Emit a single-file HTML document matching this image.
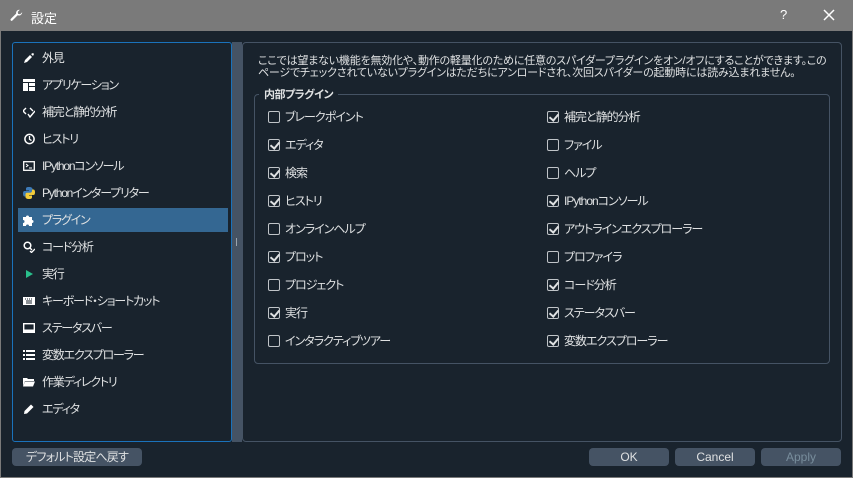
<!DOCTYPE html>
<html><head><meta charset="utf-8"><style>
*{margin:0;padding:0;box-sizing:border-box}
body{width:853px;height:478px;background:#19232d;font-family:"Liberation Sans","Noto Sans CJK JP",sans-serif;font-size:12px;color:#dfe1e2;position:relative;overflow:hidden;font-feature-settings:"palt"}
.abs{position:absolute}
#title{left:0;top:0;width:853px;height:31px;background:#7a7a7a;color:#fff}
#frame{left:0;top:31px;width:853px;height:447px;border:1px solid #7a7a7a;border-top:none}
#left{left:12px;top:42px;width:220px;height:400px;border:1px solid #1a72bb;border-radius:3px}
.it{position:absolute;left:5px;width:210px;height:24px;line-height:24px;padding-left:24px;font-size:12px;letter-spacing:-1.2px;white-space:nowrap}
.it .ic{position:absolute;left:5px;top:6px;width:12px;height:12px}
.sel{background:#346792}
#split{left:232px;top:42px;width:10px;height:400px;background:#455364}
#right{left:242px;top:42px;width:600px;height:400px;border:1px solid #455364;border-radius:4px}
#grp{left:254px;top:94px;width:576px;height:270px;border:1px solid #455364;border-radius:4px}
.cb{position:absolute;height:16px;line-height:16px;padding-left:17px;font-size:12px;letter-spacing:-1px;white-space:nowrap}
.cb i{position:absolute;left:0;top:2px;width:12px;height:12px;border:1px solid #c0c4c8;border-radius:2px}
.cb i.c::after{content:"";position:absolute;left:3px;top:0px;width:4px;height:7px;border:solid #dfe1e2;border-width:0 2px 2px 0;transform:rotate(40deg)}
.btn{position:absolute;top:448px;height:18px;background:#455364;border-radius:4px;text-align:center;line-height:18px;font-size:12px;white-space:nowrap}
.desc{left:258px;font-size:11px;letter-spacing:-0.2px;white-space:nowrap;line-height:12px}
</style></head><body>
<div id="title" class="abs">
<svg class="abs" style="left:10px;top:9px" width="13" height="13" viewBox="0 0 16 16"><path d="M15 4a4 4 0 0 1-5.5 3.7L3 14.2A1.4 1.4 0 0 1 1 12.2l6.5-6.5A4 4 0 0 1 12 1l-2.5 2.5L10 6l2.5.5L15 4z" fill="#fff"/></svg>
<span class="abs" style="left:31px;top:8px;font-size:13px">設定</span>
<span class="abs" style="left:780px;top:7px;font-size:13px">?</span>
<svg class="abs" style="left:823px;top:9px" width="12" height="12"><path d="M1 1L11 11M11 1L1 11" stroke="#fff" stroke-width="1.5"/></svg>
</div>
<div id="frame" class="abs"></div>
<div id="left" class="abs">
<div class="it" style="top:3px"><svg class="ic" viewBox="0 0 12 12"><path d="M1 11l1-3 5-5 2 2-5 5zM8 2l2-1 1 1-1 2z" fill="#fff"/></svg>外見</div>
<div class="it" style="top:30px"><svg class="ic" viewBox="0 0 12 12"><path d="M0 0h12v3H0zM0 4h5v8H0zM6 4h6v3H6zM6 8h6v4H6z" fill="#fff"/></svg>アプリケーション</div>
<div class="it" style="top:57px"><svg class="ic" viewBox="0 0 12 12"><path d="M3 2L0 5l3 3M7 2l3 3M5 8l2 3 5-6" stroke="#fff" stroke-width="1.4" fill="none"/></svg>補完と静的分析</div>
<div class="it" style="top:84px"><svg class="ic" viewBox="0 0 12 12"><circle cx="6.5" cy="6" r="4.6" stroke="#fff" stroke-width="1.5" fill="none"/><path d="M6.5 3v3.3l2 1.3" stroke="#fff" stroke-width="1.3" fill="none"/></svg>ヒストリ</div>
<div class="it" style="top:111px"><svg class="ic" viewBox="0 0 12 12"><rect x="0.7" y="1.7" width="10.6" height="8.6" stroke="#fff" stroke-width="1.3" fill="none"/><path d="M3 4l2 1.5L3 7M6 8h3" stroke="#fff" fill="none"/></svg>IPythonコンソール</div>
<div class="it" style="top:138px"><svg class="ic" viewBox="0 0 12 12"><path d="M6 0C3 0 3 1 3 2v1.5h3V4H1.5C0 4 0 6 0 7s.5 2.5 1.5 2.5H3V8c0-1 1-1.8 2-1.8h3c1 0 1.5-.7 1.5-1.5V2C9.5 1 8.5 0 6 0z" fill="#3d7ab8"/><path d="M6 12c3 0 3-1 3-2V8.5H6V8h4.5C12 8 12 6 12 5s-.5-2.5-1.5-2.5H9V4c0 1-1 1.8-2 1.8H4c-1 0-1.5.7-1.5 1.5V10c0 1 1 2 3.5 2z" fill="#f3cc3a"/></svg>Pythonインタープリター</div>
<div class="it sel" style="top:165px"><svg class="ic" viewBox="0 0 12 12"><path d="M0 3h3a1.5 1.5 0 1 1 3 0h3v3a1.5 1.5 0 1 1 0 3v3H6a1.5 1.5 0 1 0-3 0H0V9a1.5 1.5 0 1 0 0-3z" fill="#fff"/></svg>プラグイン</div>
<div class="it" style="top:192px"><svg class="ic" viewBox="0 0 12 12"><circle cx="4.5" cy="4.5" r="3.3" stroke="#fff" stroke-width="1.5" fill="none"/><path d="M7 7l2 2M7 10l1.5 1.5L12 8" stroke="#fff" stroke-width="1.3" fill="none"/></svg>コード分析</div>
<div class="it" style="top:219px"><svg class="ic" viewBox="0 0 12 12"><path d="M3 2l7 4-7 4z" fill="#29c08c"/></svg>実行</div>
<div class="it" style="top:246px"><svg class="ic" viewBox="0 0 12 12"><rect x="0" y="2" width="12" height="8" fill="#fff"/><path d="M2 4h1M4 4h1M6 4h1M8 4h1M3 6h6M3 8h6" stroke="#19232d"/></svg>キーボード・ショートカット</div>
<div class="it" style="top:273px"><svg class="ic" viewBox="0 0 12 12"><rect x="0.7" y="1.7" width="10.6" height="8.6" stroke="#fff" stroke-width="1.4" fill="none"/><rect x="1" y="7.5" width="10" height="2.5" fill="#fff"/></svg>ステータスバー</div>
<div class="it" style="top:300px"><svg class="ic" viewBox="0 0 12 12"><path d="M0 1h2v2H0zM3 1h9v2H3zM0 5h2v2H0zM3 5h9v2H3zM0 9h2v2H0zM3 9h9v2H3z" fill="#fff"/></svg>変数エクスプローラー</div>
<div class="it" style="top:327px"><svg class="ic" viewBox="0 0 12 12"><path d="M0 2h4l1 1h6v2H2L0 10zM2 5.5h10l-2 5H0z" fill="#fff"/></svg>作業ディレクトリ</div>
<div class="it" style="top:354px"><svg class="ic" viewBox="0 0 12 12"><path d="M1 11l.5-3L8 1.5l2.5 2.5L4 10.5z" fill="#fff"/></svg>エディタ</div>
</div>
<div id="split" class="abs"><div class="abs" style="left:4px;top:196px;width:1px;height:8px;background:#9aa4ae"></div></div>
<div id="right" class="abs"></div>
<div class="abs desc" style="top:55px">ここでは望まない機能を無効化や、動作の軽量化のために任意のスパイダープラグインをオン/オフにすることができます。この</div>
<div class="abs desc" style="top:67px">ページでチェックされていないプラグインはただちにアンロードされ、次回スパイダーの起動時には読み込まれません。</div>
<div id="grp" class="abs"></div>
<div class="abs" style="left:259px;top:86px;padding:0 5px;background:#19232d;font-weight:bold;font-size:11px;letter-spacing:-0.5px">内部プラグイン</div>
<div class="cb" style="left:268px;top:109px"><i></i>ブレークポイント</div>
<div class="cb" style="left:268px;top:137px"><i class="c"></i>エディタ</div>
<div class="cb" style="left:268px;top:165px"><i class="c"></i>検索</div>
<div class="cb" style="left:268px;top:193px"><i class="c"></i>ヒストリ</div>
<div class="cb" style="left:268px;top:221px"><i></i>オンラインヘルプ</div>
<div class="cb" style="left:268px;top:249px"><i class="c"></i>プロット</div>
<div class="cb" style="left:268px;top:277px"><i></i>プロジェクト</div>
<div class="cb" style="left:268px;top:305px"><i class="c"></i>実行</div>
<div class="cb" style="left:268px;top:333px"><i></i>インタラクティブツアー</div>
<div class="cb" style="left:547px;top:109px"><i class="c"></i>補完と静的分析</div>
<div class="cb" style="left:547px;top:137px"><i></i>ファイル</div>
<div class="cb" style="left:547px;top:165px"><i></i>ヘルプ</div>
<div class="cb" style="left:547px;top:193px"><i class="c"></i>IPythonコンソール</div>
<div class="cb" style="left:547px;top:221px"><i class="c"></i>アウトラインエクスプローラー</div>
<div class="cb" style="left:547px;top:249px"><i></i>プロファイラ</div>
<div class="cb" style="left:547px;top:277px"><i class="c"></i>コード分析</div>
<div class="cb" style="left:547px;top:305px"><i class="c"></i>ステータスバー</div>
<div class="cb" style="left:547px;top:333px"><i class="c"></i>変数エクスプローラー</div>
<div class="btn" style="left:12px;width:130px;letter-spacing:-0.8px">デフォルト設定へ戻す</div>
<div class="btn" style="left:589px;width:80px">OK</div>
<div class="btn" style="left:675px;width:80px">Cancel</div>
<div class="btn" style="left:761px;width:80px;color:#788d9c">Apply</div>
</body></html>
